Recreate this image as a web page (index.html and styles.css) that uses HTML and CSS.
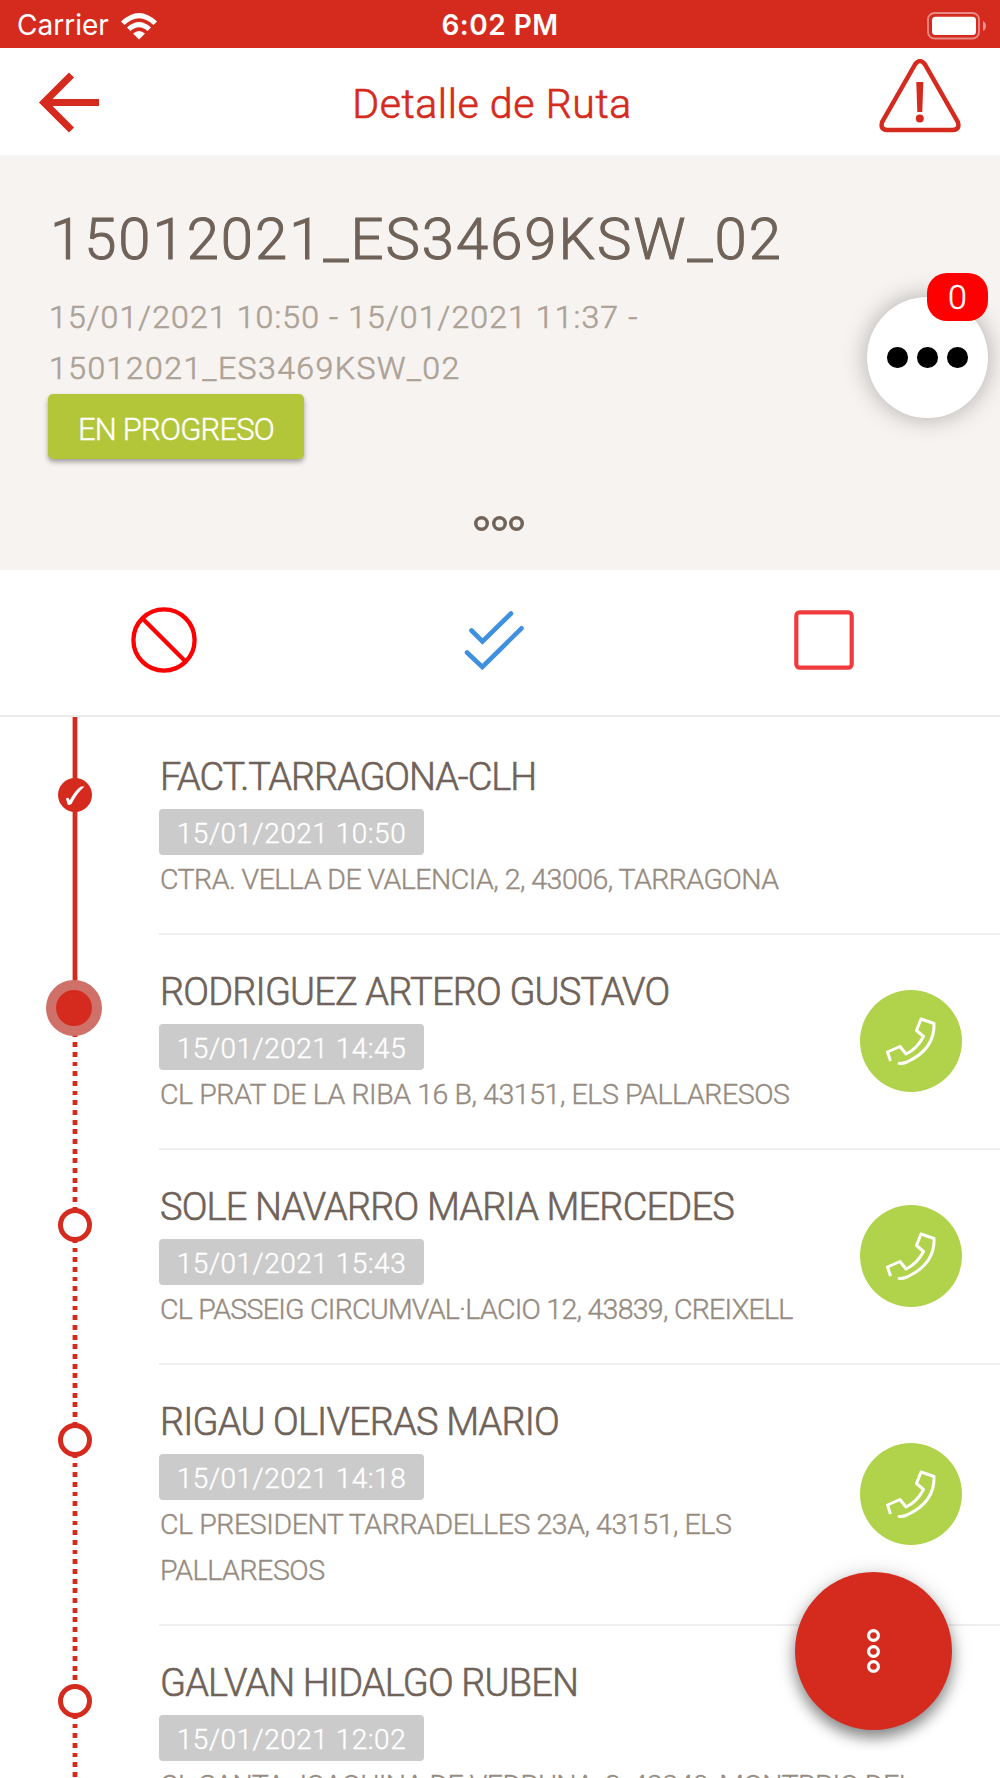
FILE: index.html
```html
<!DOCTYPE html>
<html lang="es">
<head>
    <meta charset="UTF-8">
    <meta name="viewport" content="width=device-width, initial-scale=1.0">
    <title>Detalle de Ruta</title>
    <link rel="stylesheet" href="styles.css">
</head>
<body>
    <div class="status-bar">
        <div class="carrier">
            <span>Carrier</span>
            <svg class="wifi" width="38" height="28" viewBox="0 0 38 28">
                <path d="M1 9.5Q19-7.500 37 9.500L33.500 13Q19-.5 4.500 13Z" fill="#fff"/>
                <path d="M7 15.500Q19 4.500 31 15.500L27.500 19Q19 11.500 10.500 19Z" fill="#fff"/>
                <path d="M13 21.500Q19 16.500 25 21.500L19 27.500Z" fill="#fff"/>
            </svg>
        </div>
        <span class="clock">6:02 PM</span>
        <svg class="battery" width="60" height="28" viewBox="0 0 60 28">
            <rect x="1" y="1" width="51" height="25.500" rx="6.500" fill="none" stroke="#fff" stroke-opacity=".45" stroke-width="1.800"/>
            <rect x="5" y="4.700" width="44" height="18.300" rx="3.500" fill="#fff"/>
            <path d="M56 9Q59 10.500 59 14T56 19Z" fill="#fff" fill-opacity=".5"/>
        </svg>
    </div>

    <header class="topbar">
        <svg class="back" width="62" height="62" viewBox="0 0 62 62">
            <path d="M33.500 4L6 31.500L33.500 59M6 31.500H61" fill="none" stroke="#d52b1e" stroke-width="7.200"/>
        </svg>
        <h1>Detalle de Ruta</h1>
        <svg class="warning" width="82" height="74" viewBox="0 0 82 74">
            <path d="M36.300 5L3.200 63Q.8 70.500 8 71H74Q81.200 70.500 78.800 63L45.700 5Q41-.8 36.300 5Z" fill="none" stroke="#d52b1e" stroke-width="4.500"/>
            <path d="M37.300 23H44.300L43.300 53H38.300Z" fill="#d52b1e"/>
            <circle cx="40.800" cy="59.500" r="4" fill="#d52b1e"/>
        </svg>
    </header>

    <section class="route">
        <h2>15012021_ES3469KSW_02</h2>
        <p class="route-info">15/01/2021 10:50 - 15/01/2021 11:37 -<br><span class="route-code">15012021_ES3469KSW_02</span></p>
        <span class="state">EN PROGRESO</span>
        <div class="more"><i></i><i></i><i></i></div>
        <div class="chat">
            <i></i><i></i><i></i>
            <span class="chat-count">0</span>
        </div>
    </section>

    <nav class="actions">
        <svg width="66" height="66" viewBox="0 0 66 66" fill="none" stroke="#ff0000" stroke-width="4.300">
            <circle cx="33" cy="33" r="30.600"/>
            <path d="M11.500 11.500L54.500 54.500"/>
        </svg>
        <svg class="check-all" width="60" height="60" viewBox="0 0 60 60" fill="none" stroke="#4090e0" stroke-width="4.600" stroke-linecap="round">
            <path d="M7.500 20.500L18.500 31.500L47 3.500"/>
            <path d="M3 42.500L18.300 57L57.500 18.300"/>
        </svg>
        <svg width="60" height="60" viewBox="0 0 60 60" fill="none" stroke="#f03a3c" stroke-width="4.200">
            <rect x="2.300" y="2.300" width="55.400" height="55.400" rx="3.500"/>
        </svg>
    </nav>

    <ul class="stops">
        <li class="stop done">
            <span class="marker">
                <svg width="34" height="34" viewBox="0 0 34 34"><path d="M8 20.500C10 19 11 20 11.600 22.500C15 16 19 11 23 8.500H26.500C21 13 17 19 13.500 26Q10.500 28 9.500 26Z" fill="#fff"/></svg>
            </span>
            <div class="stop-body">
                <div class="stop-text">
                    <h3 class="tight">FACT.TARRAGONA-CLH</h3>
                    <span class="time">15/01/2021 10:50</span>
                    <p>CTRA. VELLA DE VALENCIA, 2, 43006, TARRAGONA</p>
                </div>
            </div>
        </li>
        <li class="stop current">
            <span class="marker"></span>
            <div class="stop-body">
                <div class="stop-text">
                    <h3>RODRIGUEZ ARTERO GUSTAVO</h3>
                    <span class="time">15/01/2021 14:45</span>
                    <p class="loose">CL PRAT DE LA RIBA 16 B, 43151, ELS PALLARESOS</p>
                </div>
                <a class="call"><svg width="102" height="102" viewBox="0 0 102 102"><path d="M38 73Q41 74.500 47 72Q75 59 74 33.500L61 29L56.500 40.500L63.500 46.500Q57 59 46 64L40 56.500L27.500 62L30.500 71"/></svg></a>
            </div>
        </li>
        <li class="stop">
            <span class="marker"></span>
            <div class="stop-body">
                <div class="stop-text">
                    <h3>SOLE NAVARRO MARIA MERCEDES</h3>
                    <span class="time">15/01/2021 15:43</span>
                    <p class="tight">CL PASSEIG CIRCUMVAL·LACIO 12, 43839, CREIXELL</p>
                </div>
                <a class="call"><svg width="102" height="102" viewBox="0 0 102 102"><path d="M38 73Q41 74.500 47 72Q75 59 74 33.500L61 29L56.500 40.500L63.500 46.500Q57 59 46 64L40 56.500L27.500 62L30.500 71"/></svg></a>
            </div>
        </li>
        <li class="stop">
            <span class="marker"></span>
            <div class="stop-body">
                <div class="stop-text">
                    <h3>RIGAU OLIVERAS MARIO</h3>
                    <span class="time">15/01/2021 14:18</span>
                    <p class="loose">CL PRESIDENT TARRADELLES 23A, 43151, ELS PALLARESOS</p>
                </div>
                <a class="call"><svg width="102" height="102" viewBox="0 0 102 102"><path d="M38 73Q41 74.500 47 72Q75 59 74 33.500L61 29L56.500 40.500L63.500 46.500Q57 59 46 64L40 56.500L27.500 62L30.500 71"/></svg></a>
            </div>
        </li>
        <li class="stop">
            <span class="marker"></span>
            <div class="stop-body">
                <div class="stop-text">
                    <h3>GALVAN HIDALGO RUBEN</h3>
                    <span class="time">15/01/2021 12:02</span>
                    <p>CL SANTA JOAQUINA DE VEDRUNA, 2, 43340, MONTBRIO DEL</p>
                </div>
            </div>
        </li>
    </ul>

    <div class="fab"><i></i><i></i><i></i></div>
</body>
</html>
```

FILE: styles.css
```css
* {
    box-sizing: border-box;
}

html {
    overflow: hidden;
}

body {
    margin: 0;
    height: 1778px;
    overflow: hidden;
    position: relative;
    background-color: #fff;
    font-family: Roboto, sans-serif;
    font-weight: 300;
    -webkit-text-stroke: 0.4px currentColor;
    color: #6f6259;
}

h1, h2, h3, p, ul {
    margin: 0;
    padding: 0;
    font-weight: 300;
}

svg {
    display: block;
}

/* status bar */
.status-bar {
    height: 48px;
    padding: 0 13px 0 17px;
    background-color: #d52b1e;
    color: #fff;
    font-family: Inter, sans-serif;
    font-size: 28px;
    line-height: 51px;
    -webkit-text-stroke: 0;
    display: grid;
    grid-template-columns: 1fr auto 1fr;
    align-items: center;
}

.carrier {
    display: flex;
    align-items: center;
    gap: 11px;
    font-weight: 400;
}

.clock {
    font-weight: 600;
    letter-spacing: 0.5px;
    margin-right: 4px;
}

.battery {
    justify-self: end;
}

/* header */
.topbar {
    height: 107px;
    padding: 0 39px 0 38px;
    display: grid;
    grid-template-columns: 1fr auto 1fr;
    align-items: center;
    color: #d52b1e;
}

    .topbar h1 {
        margin-right: 15px;
        padding-top: 4px;
        font-size: 41px;
        line-height: 50px;
        letter-spacing: 0.6px;
        -webkit-text-stroke-width: 0.7px;
    }

.warning {
    justify-self: end;
    margin-bottom: 11px;
}

/* route summary */
.route {
    position: relative;
    height: 415px;
    padding: 50px 48px 0;
    background-color: #f6f3f0;
}

    .route h2 {
        padding-left: 2px;
        font-size: 58px;
        line-height: 68px;
        letter-spacing: 2px;
        -webkit-text-stroke-width: 1px;
    }

.route-info {
    margin-top: 19px;
    padding-left: 1px;
    font-size: 32px;
    line-height: 51px;
    letter-spacing: 1.13px;
    -webkit-text-stroke-width: 0.6px;
    color: #aca297;
}

.route-code {
    letter-spacing: 1.45px;
}

.state {
    display: block;
    width: 256px;
    height: 65px;
    border-radius: 5px;
    background-color: #b3c63a;
    box-shadow: 0 3px 5px rgba(0, 0, 0, 0.35);
    color: #fff;
    font-size: 31px;
    line-height: 71px;
    letter-spacing: -0.8px;
    text-align: center;
}

.more {
    display: flex;
    justify-content: center;
    gap: 2.5px;
    margin-top: 57px;
    padding-right: 2px;
}

    .more i {
        width: 15px;
        height: 15px;
        box-shadow: inset 0 0 0 3.5px #6f6259;
        border-radius: 50%;
    }

.chat {
    position: absolute;
    top: 142px;
    right: 12px;
    width: 121px;
    height: 121px;
    border-radius: 50%;
    background-color: #fff;
    box-shadow: 0 0 24px rgba(0, 0, 0, 0.3);
    display: flex;
    align-items: center;
    justify-content: center;
    gap: 9.5px;
}

    .chat i {
        width: 20.5px;
        height: 20.5px;
        border-radius: 50%;
        background-color: #000;
    }

.chat-count {
    position: absolute;
    top: -24px;
    right: 0;
    width: 61px;
    height: 48px;
    border-radius: 20px;
    background-color: #ff0000;
    color: #fff;
    font-size: 34px;
    line-height: 49px;
    text-align: center;
}

/* actions */
.actions {
    height: 147px;
    padding: 0 146px 5px 131px;
    border-bottom: 2px solid #ebebeb;
    display: flex;
    justify-content: space-between;
    align-items: center;
}

.check-all {
    margin-right: 4px;
}

/* stops */
.stops {
    list-style: none;
    padding-top: 3px;
}

.stop {
    position: relative;
    padding-left: 159px;
}

    .stop::before {
        content: "";
        position: absolute;
        left: 72px;
        top: 88px;
        width: 6px;
        height: 100%;
        background: linear-gradient(90deg, rgba(213, 43, 30, 0.4) 1px, #d52b1e 1px 5px, rgba(213, 43, 30, 0.4) 5px);
        -webkit-mask: repeating-linear-gradient(#000 0 4.8px, transparent 4.8px 9.67px);
        mask: repeating-linear-gradient(#000 0 4.8px, transparent 4.8px 9.67px);
    }

    .stop.done::before {
        top: -3px;
        height: 291px;
        -webkit-mask: none;
        mask: none;
    }

    .stop:last-child::before {
        height: 70px;
    }

.marker {
    position: absolute;
    z-index: 1;
    left: 58px;
    top: 58px;
    width: 34px;
    height: 34px;
    border: 5px solid #d52b1e;
    border-radius: 50%;
    background-color: #fff;
}

.done .marker {
    border: none;
    background-color: #d52b1e;
}

.current .marker {
    left: 46px;
    top: 45px;
    width: 56px;
    height: 56px;
    border: 10px solid #cf7069;
    background-color: #d52b1e;
}

.stop-body {
    display: flex;
    justify-content: space-between;
    align-items: center;
    padding: 34px 38px 31px 0;
    border-bottom: 2px solid #efefef;
}

.stop-text {
    flex: 1;
}

    .stop-text h3 {
        padding-left: 1px;
        font-size: 38px;
        line-height: 46px;
        letter-spacing: -0.83px;
        -webkit-text-stroke-width: 0.6px;
        white-space: nowrap;
    }

    .stop-text h3.tight {
        letter-spacing: -1.1px;
    }

    .stop-text p {
        padding: 1px 0 0 1px;
        margin-bottom: -1px;
        margin-top: 1px;
        font-size: 28.5px;
        line-height: 46px;
        letter-spacing: -0.53px;
        color: #968b81;
    }

    .stop-text p.tight {
        letter-spacing: -0.72px;
    }

    .stop-text p.loose {
        letter-spacing: -0.43px;
    }

.time {
    display: block;
    width: 265px;
    height: 46px;
    margin-top: 9px;
    border-radius: 4px;
    background-color: #cbcbcb;
    color: #fff;
    font-size: 28px;
    line-height: 49px;
    letter-spacing: 0.5px;
    text-align: center;
    white-space: nowrap;
}

.call {
    flex: none;
    width: 102px;
    height: 102px;
    margin: -4px 0 0;
    border-radius: 50%;
    background-color: #b0d34b;
}

    .call path {
        fill: none;
        stroke: #fff;
        stroke-width: 3;
        stroke-linejoin: round;
    }

/* floating button */
.fab {
    position: absolute;
    z-index: 2;
    left: 795px;
    top: 1572px;
    width: 157px;
    height: 158px;
    border-radius: 50%;
    background-color: #d52b1e;
    box-shadow: 0 8px 14px rgba(0, 0, 0, 0.4), 0 2px 22px rgba(0, 0, 0, 0.16);
    display: flex;
    flex-direction: column;
    align-items: center;
    justify-content: center;
    gap: 2.5px;
}

    .fab i {
        width: 13px;
        height: 13px;
        box-shadow: inset 0 0 0 3.2px #fff;
        border-radius: 50%;
    }
```
